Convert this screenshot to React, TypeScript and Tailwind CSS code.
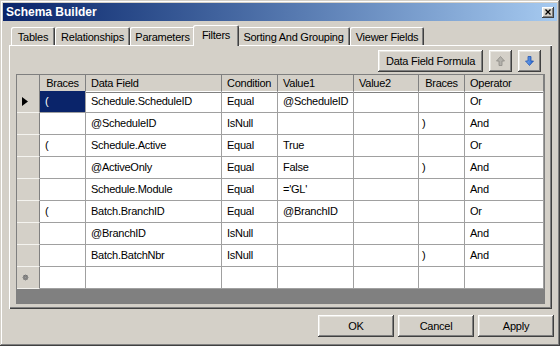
import React from "react";

const raised =
  "shadow-[inset_-1px_-1px_#404040,inset_1px_1px_#ffffff,inset_-2px_-2px_#808080,inset_2px_2px_#e8e6e0]";

const tabs = [
  { label: "Tables", w: "w-[44px]" },
  { label: "Relationships", w: "w-[75px]" },
  { label: "Parameters", w: "w-[65px]" },
  { label: "Filters", w: "w-[46px]", active: true },
  { label: "Sorting And Grouping", w: "w-[113px]" },
  { label: "Viewer Fields", w: "w-[74px]" },
];

const headers = [
  { label: "", center: true },
  { label: "Braces", center: true },
  { label: "Data Field" },
  { label: "Condition" },
  { label: "Value1" },
  { label: "Value2" },
  { label: "Braces", center: true },
  { label: "Operator" },
];

const rows = [
  ["(", "Schedule.ScheduleID", "Equal", "@ScheduleID", "", "", "Or"],
  ["", "@ScheduleID", "IsNull", "", "", ")", "And"],
  ["(", "Schedule.Active", "Equal", "True", "", "", "Or"],
  ["", "@ActiveOnly", "Equal", "False", "", ")", "And"],
  ["", "Schedule.Module", "Equal", "='GL'", "", "", "And"],
  ["(", "Batch.BranchID", "Equal", "@BranchID", "", "", "Or"],
  ["", "@BranchID", "IsNull", "", "", "", "And"],
  ["", "Batch.BatchNbr", "IsNull", "", "", ")", "And"],
  ["", "", "", "", "", "", ""],
];

const cols = "grid grid-cols-[23px_46px_136px_56px_76px_65px_46px_79px]";

function ArrowUp() {
  return (
    <svg width="9" height="10" viewBox="0 0 9 10">
      <path d="M4.5 0.5 L8.5 5 L6 5 L6 9.5 L3 9.5 L3 5 L0.5 5 Z" fill="#b4b2ac" stroke="#8e8c86" strokeWidth="0.8" />
    </svg>
  );
}

function ArrowDown() {
  return (
    <svg width="9" height="10" viewBox="0 0 9 10">
      <defs>
        <linearGradient id="blu" x1="0" y1="0" x2="1" y2="0">
          <stop offset="0" stopColor="#7fb0f0" />
          <stop offset="1" stopColor="#1d5fcf" />
        </linearGradient>
      </defs>
      <path d="M3 0.5 L6 0.5 L6 5 L8.5 5 L4.5 9.5 L0.5 5 L3 5 Z" fill="url(#blu)" stroke="#2456b0" strokeWidth="0.8" />
    </svg>
  );
}

export default function App() {
  return (
    <div className="w-[560px] h-[346px] bg-[#d4d0c8] p-[3px] flex flex-col font-['Liberation_Sans',Arial,sans-serif] text-[11px] tracking-[-0.25px] text-black shadow-[inset_-1px_-1px_#404040,inset_1px_1px_#d4d0c8,inset_-2px_-2px_#808080,inset_2px_2px_#ffffff]">
      {/* title bar */}
      <div className="h-[18px] flex items-center justify-between bg-gradient-to-r from-[#0a246a] to-[#a6caf0] pl-[3px] pr-[3px]">
        <span className="text-white font-bold text-[12px] tracking-normal">Schema Builder</span>
        <div className={`w-[12px] h-[11px] bg-[#d4d0c8] flex items-center justify-center ${raised}`}>
          <svg width="6" height="6" viewBox="0 0 6 6">
            <path d="M0.5 0.5 L5.5 5.5 M5.5 0.5 L0.5 5.5" stroke="#000" strokeWidth="1.3" />
          </svg>
        </div>
      </div>

      {/* tabs */}
      <div className="mt-[4px] ml-[8px] h-[20px] flex items-end">
        {tabs.map((t) =>
          t.active ? (
            <div
              key={t.label}
              className={`${t.w} -mx-[2px] h-[21px] -mb-[1px] relative z-10 bg-[#d4d0c8] rounded-t-[2px] flex justify-center pt-[2px] shadow-[inset_1px_1px_#ffffff,inset_-1px_0_#404040,inset_-2px_0_#808080]`}
            >
              {t.label}
            </div>
          ) : (
            <div
              key={t.label}
              className={`${t.w} h-[18px] bg-[#d4d0c8] rounded-t-[2px] flex justify-center pt-[2px] shadow-[inset_1px_1px_#ffffff,inset_-1px_0_#404040,inset_-2px_0_#808080]`}
            >
              {t.label}
            </div>
          )
        )}
      </div>

      {/* panel */}
      <div className="ml-[6px] w-[543px] h-[264px] flex flex-col px-[7px] pt-[5px] shadow-[inset_1px_1px_#ffffff,inset_-1px_-1px_#404040,inset_-2px_-2px_#808080]">
        <div className="flex justify-end gap-[6px] pr-[4px] h-[22px]">
          <div className={`w-[105px] h-[22px] flex items-center justify-center ${raised}`}>Data Field Formula</div>
          <div className={`w-[23px] h-[22px] flex items-center justify-center ${raised}`}>
            <ArrowUp />
          </div>
          <div className={`w-[23px] h-[22px] flex items-center justify-center ${raised}`}>
            <ArrowDown />
          </div>
        </div>

        <div className="mt-[2px] w-[529px] border border-[#7f7f7f] bg-[#808080]">
          <div className={`${cols} h-[16px] bg-[#d4d0c8]`}>
            {headers.map((h, i) => (
              <div
                key={i}
                className={`border-r border-b border-[#808080] flex items-center px-[5px] ${h.center ? "justify-center" : ""}`}
              >
                {h.label}
              </div>
            ))}
          </div>
          {rows.map((r, ri) => (
            <div key={ri} className={`${cols} h-[22px] bg-white`}>
              <div className="bg-[#d4d0c8] border-r border-[#808080] border-b border-b-[#f4f3ef] flex items-center pl-[5px]">
                {ri === 0 && (
                  <svg width="6" height="9" viewBox="0 0 6 9">
                    <path d="M0 0 L6 4.5 L0 9 Z" fill="#000" />
                  </svg>
                )}
                {ri === rows.length - 1 && (
                  <svg width="7" height="7" viewBox="0 0 7 7">
                    <circle cx="3.5" cy="3.5" r="2.4" fill="#505050" />
                    <path d="M3.5 0 L3.5 7 M0 3.5 L7 3.5 M1 1 L6 6 M6 1 L1 6" stroke="#9a9a9a" strokeWidth="0.7" />
                  </svg>
                )}
              </div>
              {r.map((c, ci) => (
                <div
                  key={ci}
                  className={`border-r border-b border-[#a0a0a0] flex items-center ${
                    ci === 5 ? "px-[3px]" : "px-[5px]"
                  } ${ri === 0 && ci === 0 ? "bg-[#0a246a] text-white" : ""}`}
                >
                  {c}
                </div>
              ))}
            </div>
          ))}
          <div className="h-[14px] bg-[#808080]" />
        </div>
      </div>

      {/* bottom buttons */}
      <div className="mt-[6px] flex justify-end gap-[4px] pr-[3px]">
        <div className={`w-[76px] h-[22px] flex items-center justify-center ${raised}`}>OK</div>
        <div className={`w-[76px] h-[22px] flex items-center justify-center ${raised}`}>Cancel</div>
        <div className={`w-[76px] h-[22px] flex items-center justify-center ${raised}`}>Apply</div>
      </div>
    </div>
  );
}
